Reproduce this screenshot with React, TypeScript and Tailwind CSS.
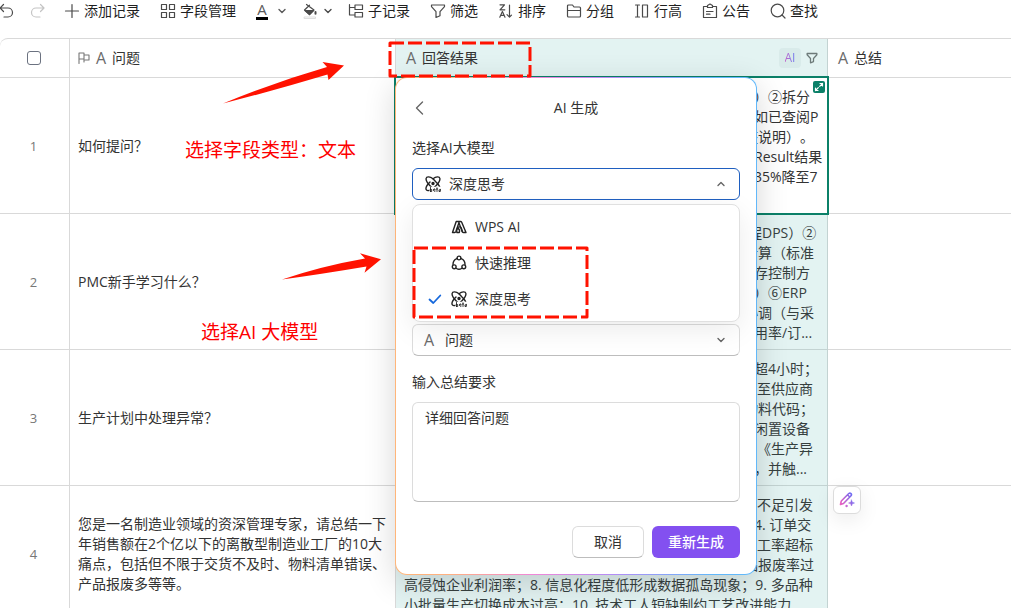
import React from "react";

type IconProps = { children: React.ReactNode; className?: string; box?: string; stroke?: string; width?: number };

function Icon({ children, className = "size-4", box = "0 0 16 16", stroke = "currentColor", width = 1.2 }: IconProps) {
  return (
    <svg
      aria-hidden="true"
      viewBox={box}
      className={`shrink-0 ${className}`}
      fill="none"
      stroke={stroke}
      strokeWidth={width}
      strokeLinecap="round"
      strokeLinejoin="round"
    >
      {children}
    </svg>
  );
}

const Chevron = ({ up = false, className = "size-3" }: { up?: boolean; className?: string }) => (
  <Icon box="0 0 12 12" className={className} width={1.4}>
    <path d={up ? "M3 7.5 6 4.5l3 3" : "M3 4.5l3 3 3-3"} />
  </Icon>
);

const Funnel = ({ className = "size-4", width = 1.2 }: { className?: string; width?: number }) => (
  <Icon className={className} width={width}>
    <path d="M1.5 2h13v1.6L10 8.6v4.2l-4 1.7V8.6L1.5 3.6z" />
  </Icon>
);

const PlusIcon = () => (
  <Icon>
    <path d="M8 1.5v13M1.5 8h13" />
  </Icon>
);

const GridIcon = () => (
  <Icon>
    <path d="M1.5 1.5h5v5h-5zM9.5 1.5h5v5h-5zM1.5 9.5h5v5h-5zM9.5 9.5h5v5h-5z" />
  </Icon>
);

const TreeIcon = () => (
  <Icon>
    <path d="M1.5 1.5v10.5h5M1.5 4.5h5M7 2h7.5v4.5H7zM7 9.5h7.5V14H7z" />
  </Icon>
);

const SortIcon = () => (
  <Icon>
    <path d="M2 1.8h4.5L2 6.8h4.8M1.8 14.2l2.6-5.6L7 14.2M2.8 12.4h3.3M11.5 2v12M9 11.6l2.5 2.5 2-2" />
  </Icon>
);

const FolderIcon = () => (
  <Icon>
    <path d="M1.5 13V3c0-.6.4-1 1-1h4L8 4h5.5c.6 0 1 .4 1 1v8c0 .6-.4 1-1 1h-11c-.6 0-1-.4-1-1zM1.5 7.5h13" />
  </Icon>
);

const HeightIcon = () => (
  <Icon>
    <path d="M1.5 2h4M3.5 2v12M1.5 14h4M8.5 2h5v12h-5z" />
  </Icon>
);

const NoticeIcon = () => (
  <Icon>
    <path d="M5.5 3.5h-4v11h13v-11h-4M5.5 4.5v-2L8 1l2.5 1.5v2zM4.5 8.5H11M4.5 11.2H8" />
  </Icon>
);

const SearchIcon = () => (
  <Icon>
    <circle cx="7.5" cy="7.5" r="6.3" />
    <path d="m12 12 3 3" />
  </Icon>
);

const BucketIcon = () => (
  <Icon>
    <path d="M4.5 1.5 12 7l-4.500 4.500L2.500 7 7.500 2.200M6.500 3l3.500 2.600" />
    <path d="M3 7.500h8.500l-4 4z" fill="currentColor" />
    <path d="M13.500 9v1.800" strokeWidth="2" />
    <path d="M2.500 14h11v1.500h-11z" stroke="#d6d6d6" strokeWidth=".8" />
  </Icon>
);

const WpsIcon = () => (
  <Icon width={1.4}>
    <path d="M5.200 2.500h2.300c.5 0 .7.400.5.900L4.800 12.800c-.2.500-.5.700-1 .7H1.500z" />
    <path d="M8 2.500h1.500c.6 0 .9.200 1.200.8L15 13.500h-2.500c-.6 0-.9-.2-1.200-.8L8.200 4.500" />
    <path d="M6.500 9c1-1.500 3-1.500 3.800 0l1 3.500M6.500 9c-.8 1.500-1.200 3-.7 4.500h2.500c.5-1.500.2-3.500-1.800-4.500z" />
  </Icon>
);

const FastIcon = () => (
  <Icon width={1.4}>
    <circle cx="8" cy="3" r="1.9" />
    <circle cx="3.2" cy="11.8" r="1.9" />
    <circle cx="12.8" cy="11.8" r="1.9" />
    <path d="M5.8 3.600C3.200 4.600 2 6.800 2 9.600M10.200 3.600c2.600 1 3.800 3.200 3.800 6M5.500 13.500c1.500 1 3.500 1 5 0" />
  </Icon>
);

const DeepIcon = () => (
  <Icon width={1.4}>
    <path d="M8 2.800C11 .5 14.500.2 14.900 2.500c.3 2-1.400 4.600-3.900 7.200-3.500 3.600-7.800 6-9.400 4.400C.3 12.700 1.500 9.500 5 6" />
    <path d="M8 2.800C5 .5 1.500.2 1.100 2.500c-.3 2 1.400 4.600 3.900 7.200 3.500 3.600 7.800 6 9.400 4.400 1.300-1.400.1-4.600-3.400-8.100z" />
    <circle cx="8" cy="7.500" r="1" fill="currentColor" />
    <rect x="4.500" y="10.700" width="11.500" height="5.300" fill="#fff" stroke="none" />
    <path d="M5.500 11.500v4M5.500 13.500h1.200v2H5.500M8.500 13.900h1.700c0-1.400-1.700-1.400-1.700 0s1 1.700 1.700 1.300M12 11.800v3.700M11.400 13h1.300M15.300 13.300v2.200h-1.300v-1.600h1.300" strokeWidth=".9" />
  </Icon>
);

const FieldA = () => <span className="w-3 shrink-0 text-center text-base leading-5 text-[#6b6b6b]">A</span>;

function Tool({ icon, label }: { icon: React.ReactNode; label: string }) {
  return (
    <button type="button" className="mr-5 flex items-center gap-1 whitespace-nowrap">
      <span className="text-[#4a4a4a]">{icon}</span>
      {label}
    </button>
  );
}

function Toolbar() {
  return (
    <header className="flex h-[38px] items-start text-[#1f1f1f]">
      <nav aria-label="工具栏" className="flex h-[22px] items-center">
        <button type="button" aria-label="撤销" className="mr-4 -ml-0.5 text-[#4a4a4a]">
          <Icon>
            <path d="M5.5 1.5 2 5l3.5 3.5M2 5h8a4 4 0 0 1 0 9H6" />
          </Icon>
        </button>
        <button type="button" aria-label="重做" className="mr-[18px] text-[#c4c4c4]">
          <Icon>
            <path d="M10.5 1.5 14 5l-3.5 3.5M14 5H6a4 4 0 0 0 0 9h4" />
          </Icon>
        </button>
        <Tool icon={<PlusIcon />} label="添加记录" />
        <Tool icon={<GridIcon />} label="字段管理" />
        <button type="button" aria-label="字体颜色" className="mr-3.5 flex items-center gap-1 text-[#5a5a5a]">
          <span className="w-4 pr-1">
            <span className="block border-b-[3px] border-black text-center text-[15px] leading-[15px]">A</span>
          </span>
          <Chevron />
        </button>
        <button type="button" aria-label="填充颜色" className="mr-3.5 flex items-center gap-1 text-[#4a4a4a]">
          <BucketIcon />
          <Chevron />
        </button>
        <Tool icon={<TreeIcon />} label="子记录" />
        <Tool icon={<Funnel />} label="筛选" />
        <Tool icon={<SortIcon />} label="排序" />
        <Tool icon={<FolderIcon />} label="分组" />
        <Tool icon={<HeightIcon />} label="行高" />
        <Tool icon={<NoticeIcon />} label="公告" />
        <Tool icon={<SearchIcon />} label="查找" />
      </nav>
    </header>
  );
}

const indents = {
  none: "",
  near: "pl-[340px]",
  close: "pl-[344px]",
  mid: "pl-[350px]",
  far: "pl-[353px]",
};

type Line = [keyof typeof indents, string];

const rows: { question: string; answer: Line[] }[] = [
  {
    question: "如何提问？",
    answer: [
      ["mid", "）②拆分"],
      ["mid", "如已查阅P"],
      ["near", "整说明）。"],
      ["mid", "Result结果"],
      ["mid", "35%降至7"],
    ],
  },
  {
    question: "PMC新手学习什么？",
    answer: [
      ["close", "程DPS）②"],
      ["near", "计算（标准"],
      ["mid", "存控制方"],
      ["mid", "）⑥ERP"],
      ["near", "协调（与采"],
      ["mid", "用率/订..."],
    ],
  },
  {
    question: "生产计划中处理异常？",
    answer: [
      ["mid", "超4小时；"],
      ["far", "至供应商"],
      ["near", "物料代码；"],
      ["mid", "闲置设备"],
      ["far", "《生产异"],
      ["mid", "，并触..."],
    ],
  },
  {
    question: "您是一名制造业领域的资深管理专家，请总结一下年销售额在2个亿以下的离散型制造业工厂的10大痛点，包括但不限于交货不及时、物料清单错误、产品报废多等等。",
    answer: [
      ["far", "不足引发"],
      ["mid", "4. 订单交"],
      ["far", "工率超标"],
      ["near", "品报废率过"],
      ["none", "高侵蚀企业利润率；8. 信息化程度低形成数据孤岛现象；9. 多品种"],
      ["none", "小批量生产切换成本过高；10. 技术工人短缺制约工艺改进能力"],
    ],
  },
];

function Sheet() {
  return (
    <table className="w-full table-fixed border-separate border-spacing-0 rounded-tl-lg border-t border-[#d9d9d9] text-left">
      <colgroup>
        <col className="w-[70px]" />
        <col className="w-[326px]" />
        <col className="w-[432px]" />
        <col />
      </colgroup>
      <thead>
        <tr className="h-[39px]">
          <th className="rounded-tl-lg border-r border-b border-[#d9d9d9] py-0 pr-0.5 pl-0">
            <input
              type="checkbox"
              aria-label="全选"
              className="mx-auto block size-3.5 appearance-none rounded-[3px] border border-[#6b7280] bg-white"
            />
          </th>
          <th className="border-r border-b border-[#d9d9d9] px-2 py-0 font-normal">
            <div className="flex items-center gap-[5px]">
              <Icon className="size-3 text-[#777]" box="0 0 12 12" width={1.1}>
                <path d="M1 11.500V1h5v6H1M6 3h5v5H7M6 7v3" />
              </Icon>
              <FieldA />
              问题
            </div>
          </th>
          <th className="border-r border-b border-[#c3d3d2] bg-[#e3f3f2] px-[9px] py-0 font-normal">
            <div className="flex items-center gap-[5px]">
              <FieldA />
              <span className="grow">回答结果</span>
              <span className="flex h-5 w-[22px] items-center justify-center rounded bg-[#d9ebea]">
                <span className="bg-linear-to-r from-[#c060c8] to-[#6a7cf0] bg-clip-text text-xs text-transparent">AI</span>
              </span>
              <button type="button" aria-label="筛选回答结果" className="text-[#6d7a79]">
                <Funnel className="size-3" width={1.7} />
              </button>
            </div>
          </th>
          <th className="border-b border-[#d9d9d9] px-[9px] py-0 font-normal">
            <div className="flex items-center gap-[5px]">
              <FieldA />
              总结
            </div>
          </th>
        </tr>
      </thead>
      <tbody>
        {rows.map((row, i) => (
          <tr key={row.question} className="h-[136px]">
            <td className="border-r border-b border-[#d9d9d9] py-0 pr-0.5 pl-0 text-center text-[13px] text-[#777]">{i + 1}</td>
            <td className="border-r border-b border-[#d9d9d9] px-2 py-0">{row.question}</td>
            <td
              className={
                i === 0
                  ? "relative border-r border-b border-[#c3d3d2] bg-white px-2 pt-[9px] pb-0 align-top"
                  : "border-r border-b border-[#c3d3d2] bg-[#e3f3f2] px-2 pt-[9px] pb-0 align-top text-[#36403f]"
              }
            >
              {row.answer.map(([indent, text]) => (
                <div key={text} className={`whitespace-nowrap ${indents[indent]}`}>
                  {text}
                </div>
              ))}
              {i === 0 && (
                <>
                  <div className="absolute -inset-0.5 border-2 border-[#0b8068]" />
                  <button
                    type="button"
                    aria-label="展开单元格"
                    className="absolute top-[3px] right-0.5 flex size-3 items-center justify-center rounded-xs bg-[#0b8068] text-white"
                  >
                    <Icon box="0 0 12 12" className="size-3">
                      <path d="M7 2.500h2.500V5M9.500 2.500l-2.800 2.800M5 9.500H2.500V7M2.500 9.500l2.800-2.800" />
                    </Icon>
                  </button>
                </>
              )}
            </td>
            <td className="border-b border-[#d9d9d9]" />
          </tr>
        ))}
      </tbody>
    </table>
  );
}

const models = [
  { name: "WPS AI", icon: <WpsIcon />, selected: false },
  { name: "快速推理", icon: <FastIcon />, selected: false },
  { name: "深度思考", icon: <DeepIcon />, selected: true },
];

function ModelMenu() {
  return (
    <div
      role="listbox"
      aria-label="AI大模型"
      className="absolute inset-x-0 top-9 z-10 rounded-lg border border-[#e0e0e0] bg-white py-1 shadow-[0_8px_28px_rgba(0,0,0,0.08)]"
    >
      {models.map((m) => (
        <button
          key={m.name}
          type="button"
          role="option"
          aria-selected={m.selected}
          className="flex h-9 w-full items-center gap-2 pl-3.5"
        >
          <span className="w-4 text-[#1668dc]">
            {m.selected && (
              <Icon width={1.8}>
                <path d="m2.500 8.500 3.800 3.500 7-7.500" />
              </Icon>
            )}
          </span>
          <span className="text-[#222]">{m.icon}</span>
          {m.name}
        </button>
      ))}
    </div>
  );
}

function GeneratePopover() {
  return (
    <section
      role="dialog"
      aria-labelledby="ai-title"
      className="absolute top-[39px] left-[395px] w-[362px] rounded-xl border border-transparent bg-[linear-gradient(#fff,#fff),linear-gradient(90deg,#ffb67a_0%,#ffb080_15%,#f087d8_38%,#b48cf5_60%,#62b8fa_88%)] p-4 shadow-[0_8px_32px_rgba(0,0,0,0.16)] [background-clip:padding-box,border-box] [background-origin:border-box]"
    >
      <div className="grid h-7 grid-cols-[16px_1fr_16px] items-center">
        <button type="button" aria-label="返回" className="text-[#666]">
          <Icon width={1.4}>
            <path d="M10.500 2 4.500 8l6 6" />
          </Icon>
        </button>
        <h2 id="ai-title" className="text-center">
          AI 生成
        </h2>
      </div>

      <label htmlFor="model" className="mt-4 block">
        选择AI大模型
      </label>
      <div className="relative mt-2.5">
        <select
          id="model"
          defaultValue="深度思考"
          className="block h-8 w-full appearance-none rounded-md border border-[#1f5fc0] bg-white pr-8 pl-9 outline-none"
        >
          <option>WPS AI</option>
          <option>快速推理</option>
          <option>深度思考</option>
        </select>
        <span className="pointer-events-none absolute top-2 left-[13px] text-[#222]">
          <DeepIcon />
        </span>
        <span className="pointer-events-none absolute top-2.5 right-[13px] text-[#666]">
          <Chevron up />
        </span>
        <ModelMenu />
      </div>

      <div className="relative mt-[124px]">
        <select
          aria-label="引用字段"
          className="block h-8 w-full appearance-none rounded-md border border-[#dcdcdc] border-b-[#bdbdbd] bg-white pr-8 pl-8 outline-none"
        >
          <option>问题</option>
        </select>
        <span className="pointer-events-none absolute top-1.5 left-[11px] flex">
          <FieldA />
        </span>
        <span className="pointer-events-none absolute top-2.5 right-[13px] text-[#666]">
          <Chevron />
        </span>
      </div>

      <label htmlFor="prompt" className="mt-4 block">
        输入总结要求
      </label>
      <textarea
        id="prompt"
        defaultValue="详细回答问题"
        className="mt-2.5 block h-[100px] w-full resize-none rounded-md border border-[#dcdcdc] border-b-[#bdbdbd] px-3 py-[5px] outline-none"
      />

      <div className="mt-6 flex justify-end gap-2">
        <button type="button" className="h-8 w-[72px] rounded-md border border-[#dcdcdc] border-b-[#bdbdbd] bg-white">
          取消
        </button>
        <button type="button" className="h-8 w-[88px] rounded-md bg-[#8350f0] font-medium text-white">
          重新生成
        </button>
      </div>
    </section>
  );
}

function Annotations() {
  return (
    <div className="pointer-events-none absolute inset-0 z-20 text-[19px] leading-7 text-[#fe0000]">
      <svg aria-hidden="true" width="620" height="330" className="absolute top-0 left-0">
        <g fill="#ff1200">
          <path d="M223 103.500Q275 82 327 67l-4.500-5 21.500 3.500L328.500 80l-1-5.500Q276 90 223 103.500z" />
          <path d="M282 279.500Q322 266 365 258.500l-5-5.200 21 6-16.500 13.400 2-6.200Q322 274 282 279.500z" />
        </g>
        <g fill="none" stroke="#ff1200" strokeWidth="3" strokeDasharray="14 4" strokeLinejoin="round">
          <rect x="390" y="43" width="140" height="33" />
          <rect x="414" y="248" width="173" height="69" />
        </g>
      </svg>
      <p className="absolute top-[136px] left-[185px]">选择字段类型：文本</p>
      <p className="absolute top-[316px] left-48 bg-white py-0.5 pr-4 pl-[9px]">选择AI 大模型</p>
    </div>
  );
}

export default function App() {
  return (
    <div className="relative h-screen overflow-hidden bg-white font-['Open_Sans','Noto_Sans_CJK_SC',sans-serif] text-sm leading-5 text-[#333] [text-spacing-trim:space-all]">
      <Toolbar />
      <main className="relative">
        <Sheet />
        <GeneratePopover />
        <button
          type="button"
          aria-label="AI 填写"
          className="absolute top-[448px] left-[833px] flex size-7 items-center justify-center rounded-md border border-[#dcdcdc] bg-white shadow-[0_6px_20px_rgba(0,0,0,0.08)]"
        >
          <Icon stroke="url(#magic)" width={1.6}>
            <defs>
              <linearGradient id="magic" gradientUnits="userSpaceOnUse" x1="1" y1="10" x2="14" y2="4">
                <stop offset="0" stopColor="#ea5fc0" />
                <stop offset="1" stopColor="#6a6cf5" />
              </linearGradient>
            </defs>
            <path d="m1.500 12.500.8-3.500 7.500-7.500c1.500-1.200 3.500.8 2.200 2.200L4.500 11.500zM8.500 2.800l2.200 2.200" />
            <path d="m12.500 8 .8 2.200 2.200.8-2.200.8-.8 2.200-.8-2.200-2.200-.8 2.200-.8z" fill="url(#magic)" strokeWidth=".5" />
            <circle cx="7.500" cy="14" r=".9" fill="url(#magic)" strokeWidth=".5" />
          </Icon>
        </button>
      </main>
      <Annotations />
    </div>
  );
}
